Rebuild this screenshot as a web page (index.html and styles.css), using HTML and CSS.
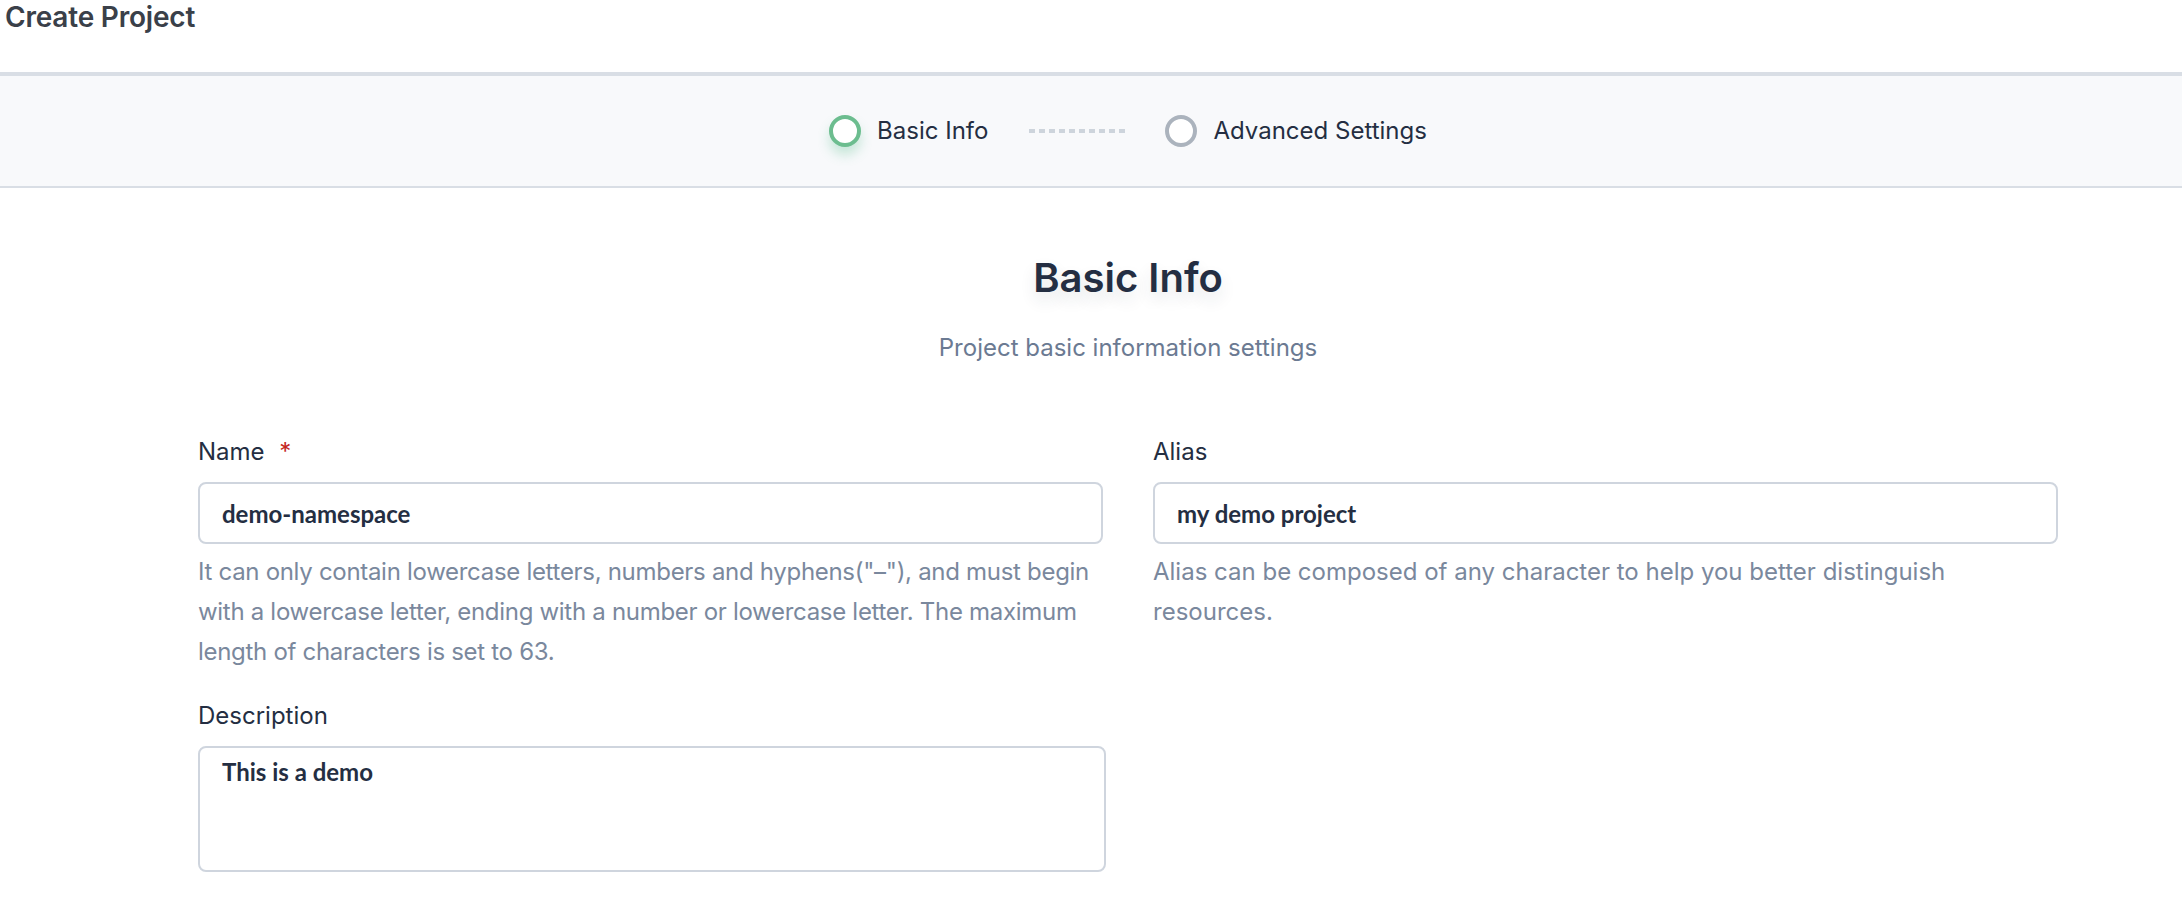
FILE: index.html
```html
<!DOCTYPE html>
<html lang="en">
<head>
<meta charset="utf-8">
<title>Create Project</title>
<link rel="stylesheet" href="styles.css">
</head>
<body>
  <header class="page-header">
    <h1 class="page-title">Create Project</h1>
  </header>

  <nav class="steps-band">
    <div class="steps">
      <div class="step step-active">
        <span class="step-dot"></span>
        <span class="step-label">Basic Info</span>
      </div>
      <span class="step-line"></span>
      <div class="step">
        <span class="step-dot"></span>
        <span class="step-label">Advanced Settings</span>
      </div>
    </div>
  </nav>

  <main class="content">
    <div class="intro">
      <h2 class="intro-title">Basic Info</h2>
      <p class="intro-desc">Project basic information settings</p>
    </div>

    <form class="form-grid">
      <div class="field">
        <label class="field-label">Name <span class="required">*</span></label>
        <input class="field-input" type="text" value="demo-namespace">
        <p class="field-help field-help-tight">It can only contain lowercase letters, numbers and hyphens("–"), and must begin with a lowercase letter, ending with a number or lowercase letter. The maximum length of characters is set to 63.</p>
      </div>
      <div class="field">
        <label class="field-label">Alias</label>
        <input class="field-input" type="text" value="my demo project">
        <p class="field-help">Alias can be composed of any character to help you better distinguish resources.</p>
      </div>
      <div class="field field-wide">
        <label class="field-label">Description</label>
        <textarea class="field-textarea">This is a demo</textarea>
      </div>
    </form>
  </main>
</body>
</html>
```

FILE: styles.css
```css
* {
  box-sizing: border-box;
}

html, body {
  margin: 0;
  padding: 0;
  background: #ffffff;
}

body {
  font-family: "Inter", "Noto Sans", sans-serif;
  color: #242e42;
  width: 2182px;
  height: 906px;
  overflow: hidden;
}

.page-header {
  height: 76px;
  border-bottom: 4px solid #d9dee5;
  padding-left: 5px;
}

.page-title {
  margin: 0;
  font-size: 28px;
  line-height: 34px;
  font-weight: 600;
  color: #3a4049;
  letter-spacing: -0.2px;
}

.steps-band {
  height: 112px;
  background: #f8f9fb;
  border-bottom: 2px solid #d9dee5;
  padding-left: 74px;
  display: flex;
  justify-content: center;
  align-items: center;
}

.steps {
  display: flex;
  align-items: center;
}

.step {
  display: flex;
  align-items: center;
  gap: 16px;
}

.step-dot {
  width: 32px;
  height: 32px;
  border-radius: 50%;
  border: 4px solid #abb3bd;
  background: #ffffff;
}

.step-active .step-dot {
  border-color: #6cbd8f;
  box-shadow: 0 8px 12px rgba(85, 188, 138, 0.3);
}

.step-label {
  font-size: 24px;
  line-height: 32px;
  color: #242e42;
}

.step-line {
  width: 96px;
  height: 4px;
  margin: 0 40px 0 41px;
  background: repeating-linear-gradient(90deg, #cdd4dc 0, #cdd4dc 6px, transparent 6px, transparent 10px);
}

.content {
  padding-left: 74px;
  padding-top: 62px;
}

.intro {
  text-align: center;
}

.intro-title {
  margin: 0;
  font-size: 40px;
  line-height: 56px;
  font-weight: 600;
  color: #242e42;
  text-shadow: 0 8px 16px rgba(36, 46, 66, 0.12);
}

.intro-desc {
  margin: 22px 0 0;
  font-size: 24px;
  line-height: 40px;
  color: #6b7a92;
}

.form-grid {
  margin-top: 64px;
  display: grid;
  grid-template-columns: 905px 905px;
  column-gap: 50px;
  row-gap: 24px;
  justify-content: center;
  align-items: start;
}

.field {
  display: flex;
  flex-direction: column;
}

.field-label {
  font-size: 24px;
  line-height: 40px;
  color: #242e42;
  margin-bottom: 10px;
}

.required {
  color: #c4281f;
  margin-left: 8px;
}

.field-input,
.field-textarea {
  width: 100%;
  border: 2px solid #cfd5de;
  border-radius: 8px;
  background: #ffffff;
  font-family: "Lato", "Open Sans", sans-serif;
  font-weight: 700;
  font-size: 24px;
  color: #242e42;
  outline: none;
}

.field-input {
  height: 62px;
  padding: 0 22px;
}

.field-textarea {
  width: 908px;
  height: 126px;
  padding: 4px 22px;
  line-height: 40px;
  resize: none;
}

.field-help {
  margin: 8px 0 0;
  font-size: 24px;
  line-height: 40px;
  color: #7a889d;
}

.field-help-tight {
  letter-spacing: -0.3px;
}
```
